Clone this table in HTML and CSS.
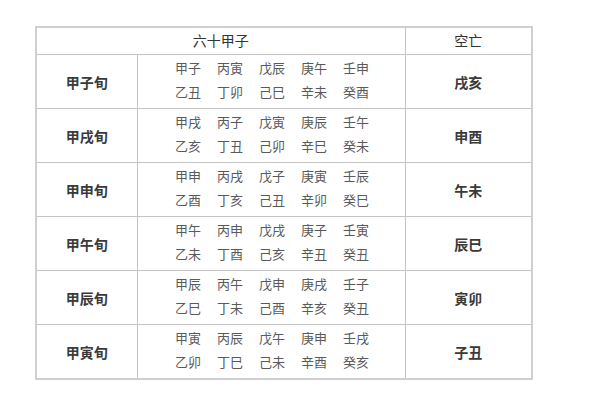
FILE: index.html
```html
<!DOCTYPE html>
<html lang="zh-CN">
<head>
<meta charset="utf-8">
<title>六十甲子</title>
<link rel="stylesheet" href="styles.css">
</head>
<body>
<table class="jz">
  <colgroup>
    <col class="c-xun">
    <col class="c-list">
    <col class="c-kong">
  </colgroup>
  <thead>
    <tr class="head">
      <th colspan="2">六十甲子</th>
      <th>空亡</th>
    </tr>
  </thead>
  <tbody>
    <tr>
      <td class="xun">甲子旬</td>
      <td class="list">
        <div class="line"><span>甲子</span><span>丙寅</span><span>戊辰</span><span>庚午</span><span>壬申</span></div>
        <div class="line"><span>乙丑</span><span>丁卯</span><span>己巳</span><span>辛未</span><span>癸酉</span></div>
      </td>
      <td class="kong">戌亥</td>
    </tr>
    <tr>
      <td class="xun">甲戌旬</td>
      <td class="list">
        <div class="line"><span>甲戌</span><span>丙子</span><span>戊寅</span><span>庚辰</span><span>壬午</span></div>
        <div class="line"><span>乙亥</span><span>丁丑</span><span>己卯</span><span>辛巳</span><span>癸未</span></div>
      </td>
      <td class="kong">申酉</td>
    </tr>
    <tr>
      <td class="xun">甲申旬</td>
      <td class="list">
        <div class="line"><span>甲申</span><span>丙戌</span><span>戊子</span><span>庚寅</span><span>壬辰</span></div>
        <div class="line"><span>乙酉</span><span>丁亥</span><span>己丑</span><span>辛卯</span><span>癸巳</span></div>
      </td>
      <td class="kong">午未</td>
    </tr>
    <tr>
      <td class="xun">甲午旬</td>
      <td class="list">
        <div class="line"><span>甲午</span><span>丙申</span><span>戊戌</span><span>庚子</span><span>壬寅</span></div>
        <div class="line"><span>乙未</span><span>丁酉</span><span>己亥</span><span>辛丑</span><span>癸丑</span></div>
      </td>
      <td class="kong">辰巳</td>
    </tr>
    <tr>
      <td class="xun">甲辰旬</td>
      <td class="list">
        <div class="line"><span>甲辰</span><span>丙午</span><span>戊申</span><span>庚戌</span><span>壬子</span></div>
        <div class="line"><span>乙巳</span><span>丁未</span><span>己酉</span><span>辛亥</span><span>癸丑</span></div>
      </td>
      <td class="kong">寅卯</td>
    </tr>
    <tr>
      <td class="xun">甲寅旬</td>
      <td class="list">
        <div class="line"><span>甲寅</span><span>丙辰</span><span>戊午</span><span>庚申</span><span>壬戌</span></div>
        <div class="line"><span>乙卯</span><span>丁巳</span><span>己未</span><span>辛酉</span><span>癸亥</span></div>
      </td>
      <td class="kong">子丑</td>
    </tr>
  </tbody>
</table>
</body>
</html>
```
FILE: styles.css
```css
html, body {
  margin: 0;
  padding: 0;
  background: #ffffff;
}
body {
  padding: 26px 0 0 35px;
  font-family: "Noto Sans CJK SC", "Noto Sans", sans-serif;
  color: #333;
}
.jz {
  border-collapse: collapse;
  border: 2px solid #cfcfcf;
  table-layout: fixed;
  width: 498px;
}
.c-xun { width: 101px; }
.c-list { width: 268px; }
.c-kong { width: 127px; }
.jz th, .jz td {
  border: 1px solid #c4c4c4;
  padding: 0;
  text-align: center;
  vertical-align: middle;
}
.head th {
  height: 24px;
  font-size: 14px;
  font-weight: normal;
  color: #333;
  line-height: 14px;
  padding-bottom: 2px;
}
.jz tbody td {
  height: 49px;
}
.xun {
  font-size: 14px;
  font-weight: bold;
  color: #3a3a3a;
}
.kong {
  font-size: 14px;
  font-weight: bold;
  color: #3a3a3a;
}
.list {
  font-size: 13px;
  color: #5a5a5a;
}
.list .line {
  display: flex;
  justify-content: center;
  gap: 16px;
  line-height: 24px;
  padding-left: 2px;
}
.jz tbody td.list {
  padding-bottom: 4px;
}
```
